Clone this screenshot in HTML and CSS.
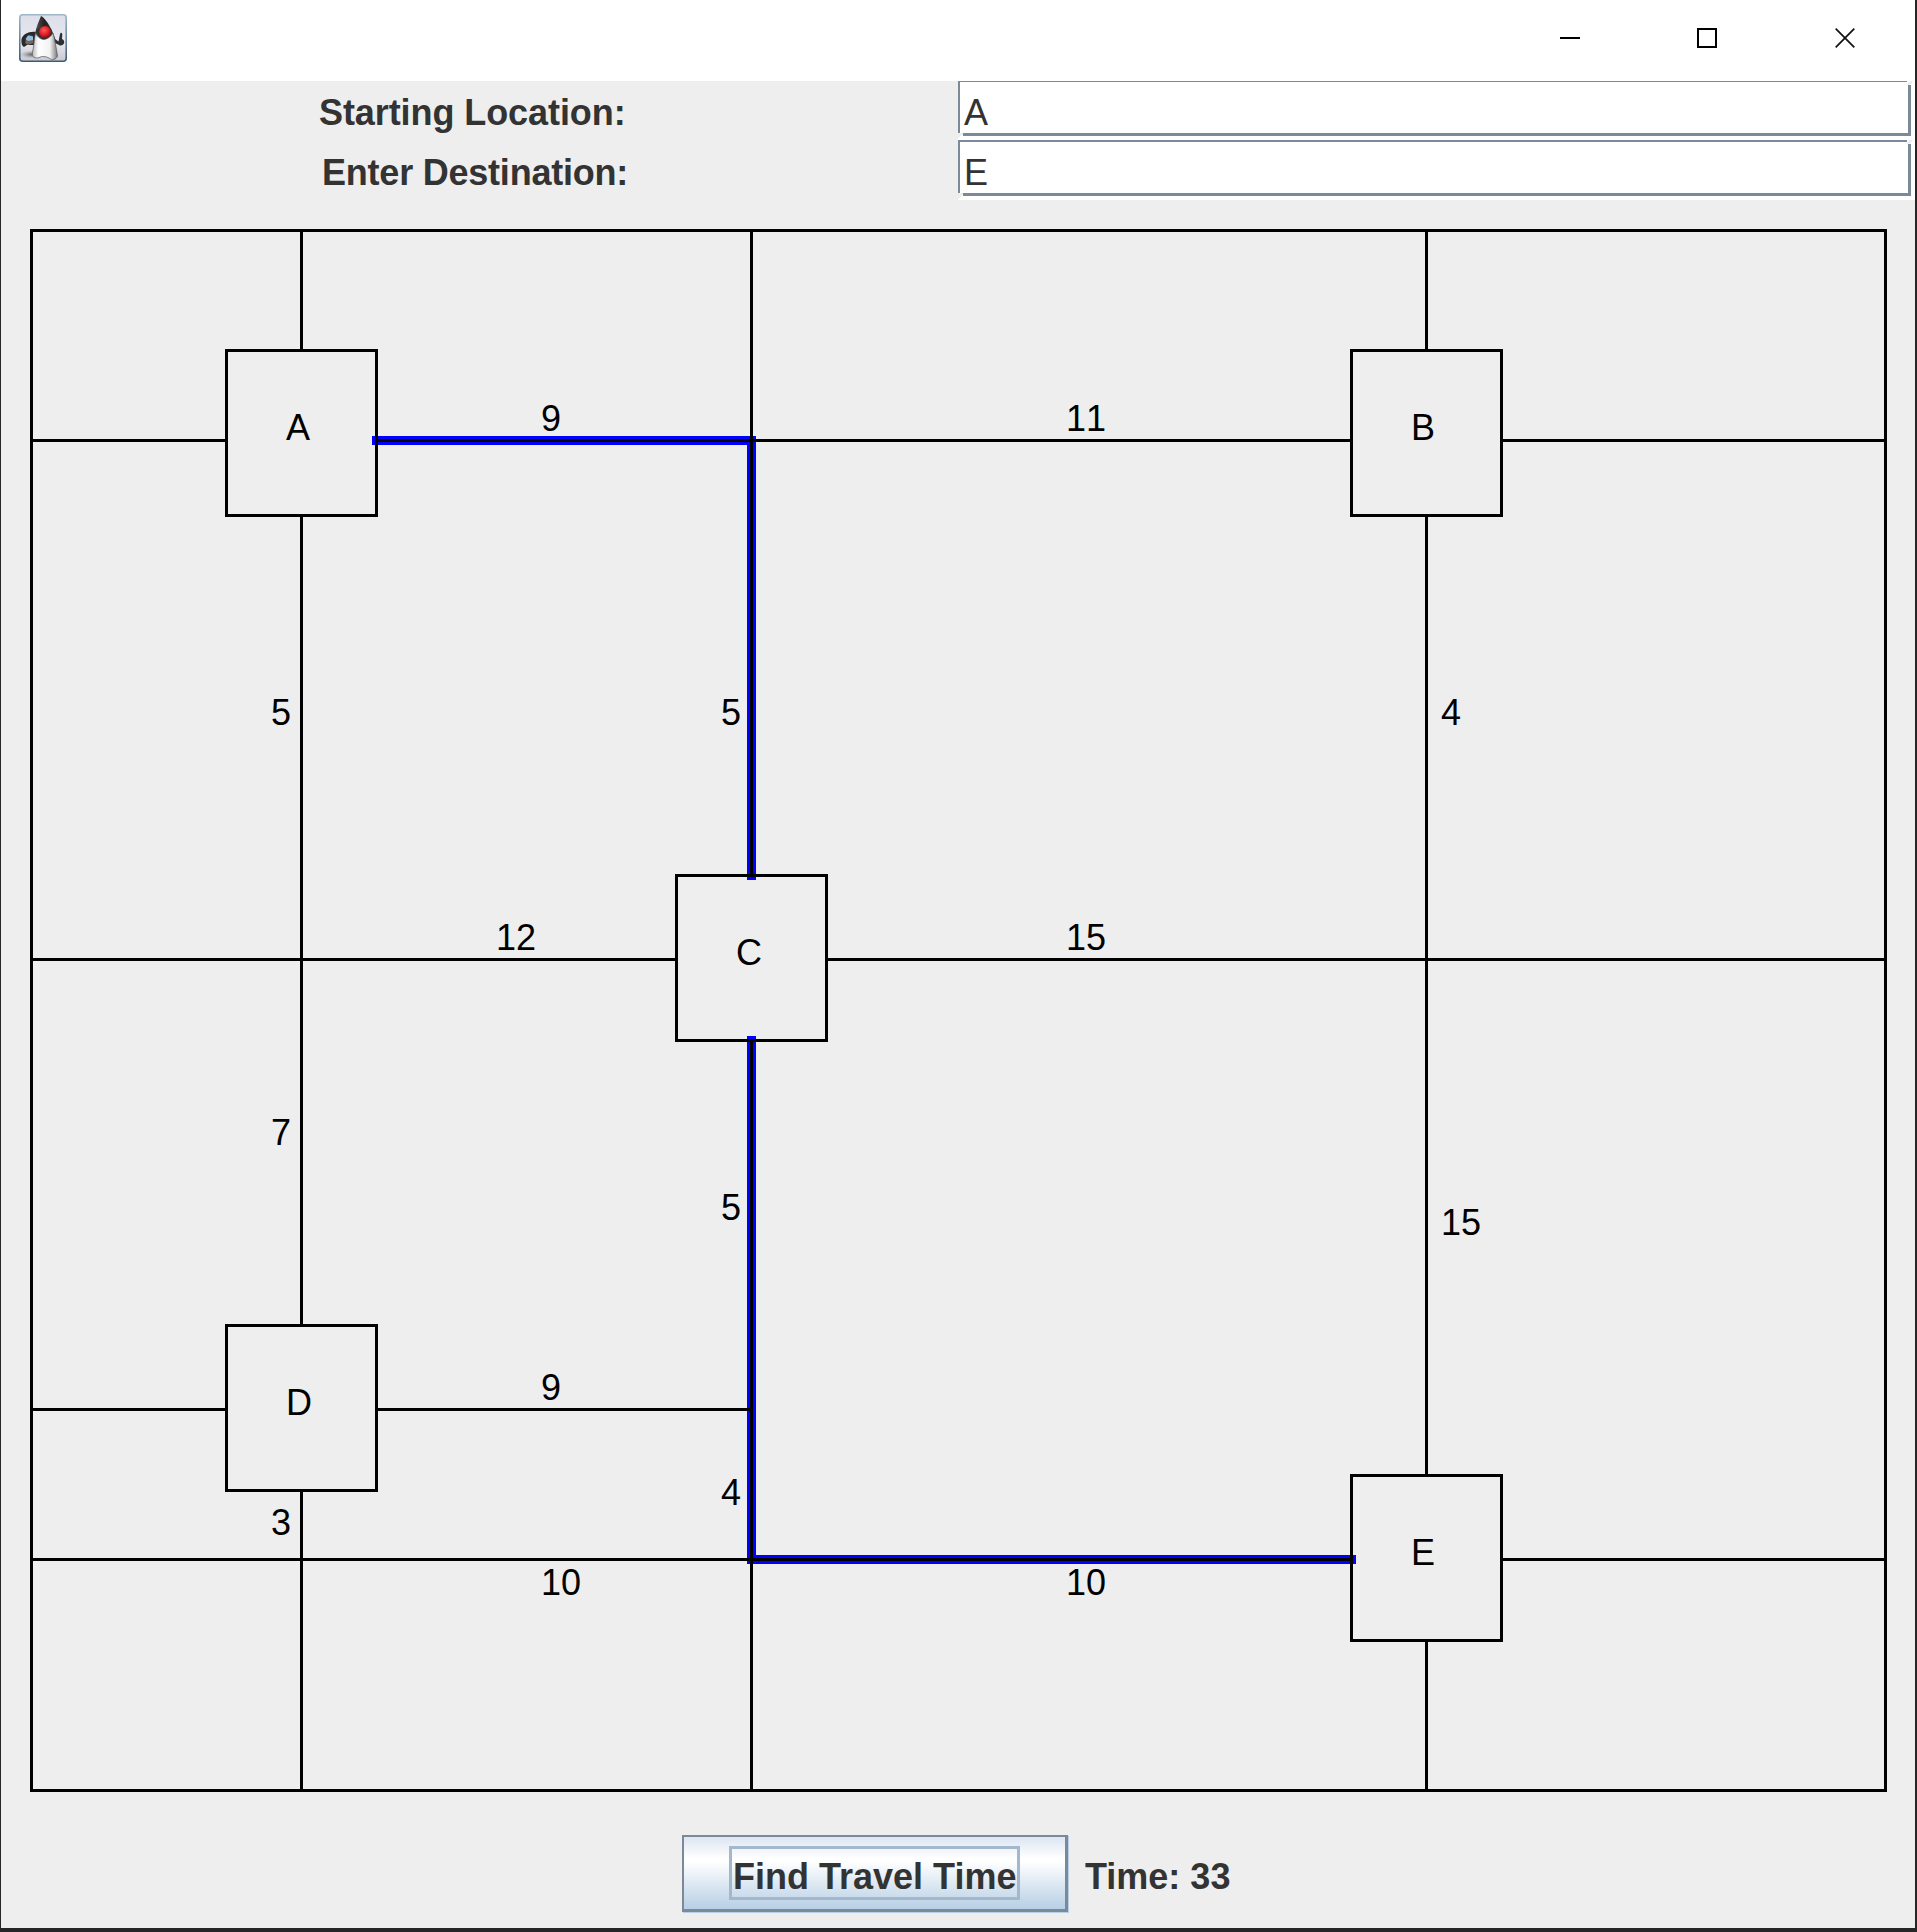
FILE: index.html
```html
<!DOCTYPE html>
<html lang="en">
<head>
<meta charset="utf-8">
<title>Travel Time</title>
<link rel="stylesheet" href="styles.css">
</head>
<body>
<div class="window">
  <header class="titlebar">
    <svg class="app-icon" width="48" height="48" viewBox="0 0 48 48">
      <defs>
        <linearGradient id="tile" x1="0" y1="0" x2="0" y2="1"><stop offset="0" stop-color="#dcdfe9"/><stop offset=".6" stop-color="#e8e8f0"/><stop offset="1" stop-color="#c8c8d0"/></linearGradient>
        <linearGradient id="rim" x1="0" y1="0" x2="0" y2="1"><stop offset="0" stop-color="#9db6ca"/><stop offset="1" stop-color="#3c5a78"/></linearGradient>
        <linearGradient id="belly" x1="0" y1="0" x2="1" y2="0"><stop offset="0" stop-color="#b8b8b8"/><stop offset=".25" stop-color="#fff"/><stop offset=".7" stop-color="#f2f2f2"/><stop offset="1" stop-color="#777"/></linearGradient>
        <linearGradient id="hat" x1="0" y1="0" x2="1" y2="0"><stop offset="0" stop-color="#555"/><stop offset=".45" stop-color="#222"/><stop offset="1" stop-color="#383838"/></linearGradient>
        <radialGradient id="nose" cx=".42" cy=".35" r=".65"><stop offset="0" stop-color="#ff5a50"/><stop offset=".6" stop-color="#e0202a"/><stop offset="1" stop-color="#8c1015"/></radialGradient>
        <radialGradient id="shade"><stop offset="0" stop-color="#444" stop-opacity=".8"/><stop offset="1" stop-color="#888" stop-opacity="0"/></radialGradient>
      </defs>
      <rect x=".8" y=".8" width="46.4" height="46.4" rx="3" fill="url(#tile)" stroke="url(#rim)" stroke-width="1.6"/>
      <ellipse cx="13" cy="40.5" rx="12" ry="4" fill="url(#shade)"/>
      <path d="M17 18C10 17 4 20 2.5 25C2 29 3 32 5 33L8 31L15 31Z" fill="#292929"/>
      <path d="M7 25L10 21L14 22L14.5 29L9 31L6 29Z" fill="#7b6455"/>
      <path d="M6.5 25L9 21.5L14 22.5L14 26L9 27Z" fill="#8dbfe9"/>
      <path d="M36 25L39.5 27.5L41 20Q42 17.5 43.3 20L43 25Q46 26 45 29.5Q43 32.5 40 31L36 29Z" fill="#2c3033"/>
      <path d="M22 2C24 2 31 11 33 17L36 24L37 29L16 27L16.5 19C17 13 20 7 22 2Z" fill="url(#hat)"/>
      <path d="M16.5 19C21 28 29 27 34 19C36 26 37 33 38.5 42C37 46 33 46.5 30 44C26 42 23 42 20 43.5C16 45 13 43 13.3 39C15 33 15 26 16.5 19Z" fill="url(#belly)" stroke="#555" stroke-width=".7"/>
      <path d="M16.5 17C20 26 29 27 33.5 18.5L32 14.5H18Z" fill="#333"/>
      <circle cx="26" cy="18" r="5.9" fill="url(#nose)"/>
    </svg>
    <div class="controls">
      <svg width="20" height="20"><path d="M0 10H20" stroke="#000" stroke-width="2"/></svg>
      <svg width="20" height="20"><rect x="1" y="1" width="18" height="18" fill="none" stroke="#000" stroke-width="2"/></svg>
      <svg width="20" height="20"><path d="M.7 .7L19.3 19.3M19.3 .7L.7 19.3" stroke="#111" stroke-width="1.7"/></svg>
    </div>
  </header>
  <form class="route-form">
    <label class="label start">Starting Location:</label>
    <div class="field first">A</div>
    <label class="label dest">Enter Destination:</label>
    <div class="field second">E</div>
  </form>
  <main class="map">
    <svg class="roads" width="1914" height="1620" viewBox="1 200 1914 1620">
      <g class="route">
        <path d="M376.5 440.5H751.5V875.5"/>
        <path d="M751.5 1040.5V1559.5H1351.5"/>
      </g>
      <g class="road">
        <rect x="31.5" y="230.5" width="1854" height="1560"/>
        <path d="M301.5 230.5V350.5M301.5 515.5V1325.5M301.5 1490.5V1790.5"/>
        <path d="M751.5 230.5V875.5M751.5 1040.5V1790.5"/>
        <path d="M1426.5 230.5V350.5M1426.5 515.5V1475.5M1426.5 1640.5V1790.5"/>
        <path d="M31.5 440.5H226.5M376.5 440.5H1351.5M1501.5 440.5H1885.5"/>
        <path d="M31.5 959.5H676.5M826.5 959.5H1885.5"/>
        <path d="M31.5 1409.5H226.5M376.5 1409.5H751.5"/>
        <path d="M31.5 1559.5H1351.5M1501.5 1559.5H1885.5"/>
        <rect x="226.5" y="350.5" width="150" height="165"/>
        <rect x="1351.5" y="350.5" width="150" height="165"/>
        <rect x="676.5" y="875.5" width="150" height="165"/>
        <rect x="226.5" y="1325.5" width="150" height="165"/>
        <rect x="1351.5" y="1475.5" width="150" height="165"/>
      </g>
      <g class="names">
        <text x="286" y="440">A</text>
        <text x="1411" y="440">B</text>
        <text x="736" y="965">C</text>
        <text x="286" y="1415">D</text>
        <text x="1411" y="1565">E</text>
        <text x="541" y="431">9</text>
        <text x="1066" y="431">11</text>
        <text x="271" y="725">5</text>
        <text x="721" y="725">5</text>
        <text x="1441" y="725">4</text>
        <text x="496" y="950">12</text>
        <text x="1066" y="950">15</text>
        <text x="271" y="1145">7</text>
        <text x="721" y="1220">5</text>
        <text x="1441" y="1235">15</text>
        <text x="541" y="1400">9</text>
        <text x="721" y="1505">4</text>
        <text x="271" y="1535">3</text>
        <text x="541" y="1595">10</text>
        <text x="1066" y="1595">10</text>
      </g>
    </svg>
  </main>
  <footer class="actions">
    <button class="find" type="button"><span class="focus">Find Travel Time</span></button>
    <span class="time">Time: 33</span>
  </footer>
</div>
</body>
</html>
```
FILE: styles.css
```css
* { box-sizing: border-box; }
body { margin: 0; background: #262626; font-family: "Liberation Sans", Arial, sans-serif; font-size: 36px; }
.window { display: flex; flex-direction: column; width: 1917px; height: 1932px; border: solid #262626; border-width: 0 2px 4px 1px; background: #eee; }
.titlebar { display: flex; justify-content: space-between; height: 81px; padding: 14px 60px 0 18px; background: #fff; }
.controls { display: flex; gap: 118px; padding-top: 14px; }
.controls svg { display: block; }
.controls svg:nth-child(2) { margin-left: -1px; }
.route-form { display: grid; grid-template-columns: 957px 957px; grid-template-rows: 59px 60px; height: 119px; margin: 0; color: #333; }
.label { font-weight: bold; line-height: 41px; white-space: nowrap; }
.start { padding: 11px 0 0 318px; letter-spacing: -.08px; }
.dest { padding: 12px 0 0 321px; letter-spacing: -.22px; }
.field { position: relative; padding: 8px 0 0 4px; line-height: 41px; background: #fff; border: solid #7a8a99; border-width: 2px 3px 3px 2px; margin-right: 4px; margin-bottom: 4px; box-shadow: 4px 0 #fff, 0 4px #fff, 4px 4px #fff; }
.first { border-top-width: 1px; padding-top: 10px; }
.second { padding-top: 10px; }
.field::before { content: ""; position: absolute; left: -2px; bottom: -7px; width: 5px; height: 7px; background: linear-gradient(135deg, #eee 50%, #fff 50%); }
.field::after { content: ""; position: absolute; right: -5px; top: -2px; width: 6px; height: 4px; background: linear-gradient(135deg, #fff 30%, #eee 30%, #eee 70%, #fff 70%); }
.first::after { top: -1px; }
.map { height: 1620px; }
.roads { display: block; }
.route { fill: none; stroke: #00f; stroke-width: 9px; stroke-linecap: square; }
.road { fill: none; stroke: #000; stroke-width: 3px; stroke-linecap: square; shape-rendering: crispEdges; }
.names { fill: #000; font-kerning: none; }
.actions { display: flex; padding: 15px 0 0 681px; color: #333; font-weight: bold; }
.find { display: flex; width: 386px; height: 77px; padding: 9px 0 0 45px; border: solid #7a8a99; border-width: 2px 3px 3px 2px; border-radius: 0; background: linear-gradient(#dde5f2 0, #fff 30%, #fff 34%, #b8cfe5 100%); box-shadow: 1px 1px #b8cfe5; font: inherit; color: inherit; }
.focus { width: 291px; height: 54px; padding: 7px 0 0 1px; border: 3px solid #a3b8cc; line-height: 41px; text-align: left; white-space: nowrap; }
.time { padding: 21px 0 0 17px; line-height: 41px; white-space: nowrap; }
```
